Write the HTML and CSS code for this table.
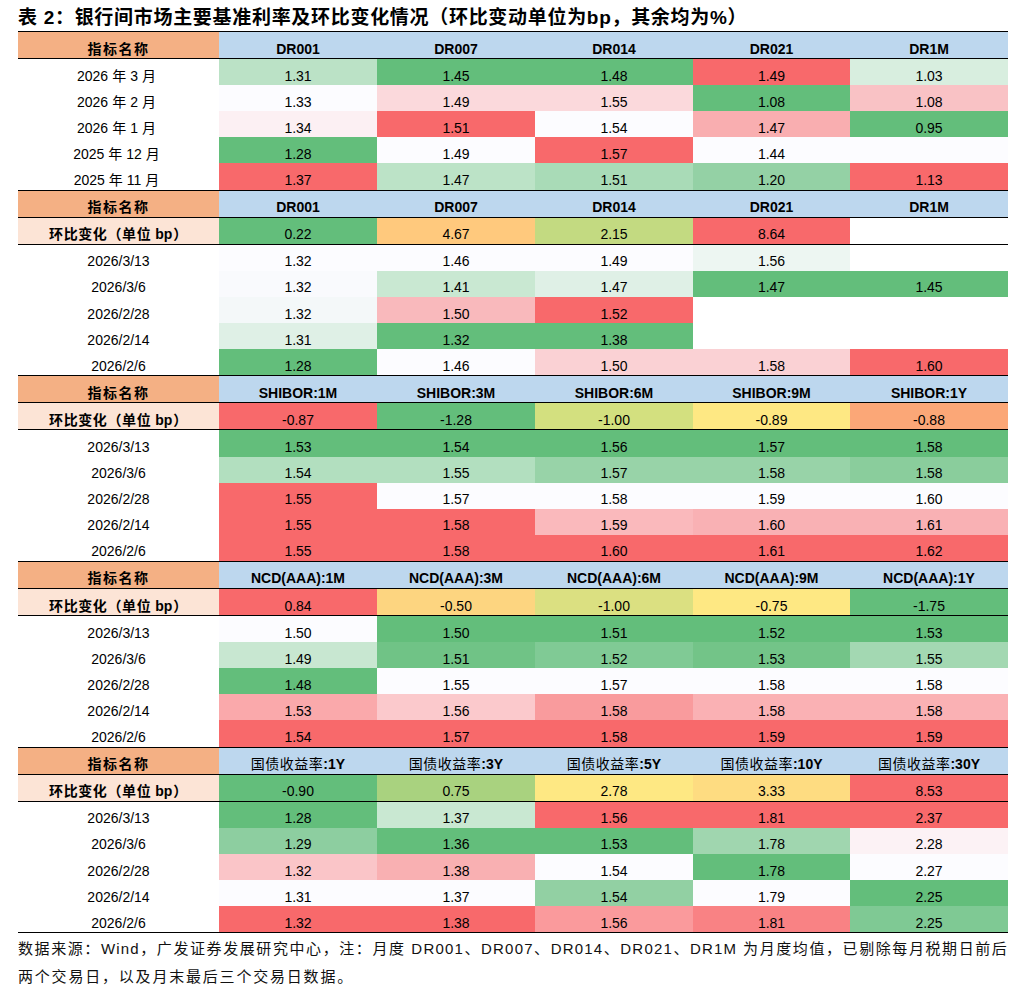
FILE: index.html
```html
<!DOCTYPE html>
<html lang="zh-CN">
<head>
<meta charset="utf-8">
<title>表 2</title>
<link rel="stylesheet" href="styles.css">
</head>
<body>
<div class="page">
  <div class="title">表 2：银行间市场主要基准利率及环比变化情况（环比变动单位为bp，其余均为%）</div>
  <div class="tbl">
    <div class="sec">
      <div class="row hd">
        <div class="c name">指标名称</div><div class="c th">DR001</div><div class="c th">DR007</div><div class="c th">DR014</div><div class="c th">DR021</div><div class="c th">DR1M</div>
      </div>
      <div class="row">
        <div class="c lab">2026<span class="cj">年</span>3<span class="cj">月</span></div>
        <div class="c" style="background:#BBE2C6">1.31</div><div class="c g">1.45</div><div class="c g">1.48</div><div class="c r">1.49</div><div class="c" style="background:#D8EEDF">1.03</div>
      </div>
      <div class="row">
        <div class="c lab">2026<span class="cj">年</span>2<span class="cj">月</span></div>
        <div class="c w">1.33</div><div class="c" style="background:#FBD9DC">1.49</div><div class="c" style="background:#FBD9DC">1.55</div><div class="c g">1.08</div><div class="c" style="background:#F9C2C5">1.08</div>
      </div>
      <div class="row">
        <div class="c lab">2026<span class="cj">年</span>1<span class="cj">月</span></div>
        <div class="c" style="background:#FCF0F3">1.34</div><div class="c r">1.51</div><div class="c w">1.54</div><div class="c" style="background:#F9AEB0">1.47</div><div class="c g">0.95</div>
      </div>
      <div class="row">
        <div class="c lab">2025<span class="cj">年</span>12<span class="cj">月</span></div>
        <div class="c g">1.28</div><div class="c w">1.49</div><div class="c r">1.57</div><div class="c w">1.44</div><div class="c w"></div>
      </div>
      <div class="row">
        <div class="c lab">2025<span class="cj">年</span>11<span class="cj">月</span></div>
        <div class="c r">1.37</div><div class="c" style="background:#BCE3C7">1.47</div><div class="c" style="background:#A9DBB7">1.51</div><div class="c" style="background:#94D1A5">1.20</div><div class="c r">1.13</div>
      </div>
    </div>

    <div class="sec">
      <div class="row hd">
        <div class="c name">指标名称</div><div class="c th">DR001</div><div class="c th">DR007</div><div class="c th">DR014</div><div class="c th">DR021</div><div class="c th">DR1M</div>
      </div>
      <div class="row chg">
        <div class="c chl">环比变化（单位<b>bp</b>）</div>
        <div class="c g">0.22</div><div class="c" style="background:#FFC97D">4.67</div><div class="c" style="background:#C3DA81">2.15</div><div class="c r">8.64</div><div class="c"></div>
      </div>
      <div class="row">
        <div class="c lab">2026/3/13</div>
        <div class="c w">1.32</div><div class="c w">1.46</div><div class="c w">1.49</div><div class="c" style="background:#EDF6F2">1.56</div><div class="c"></div>
      </div>
      <div class="row">
        <div class="c lab">2026/3/6</div>
        <div class="c" style="background:#F9FAFD">1.32</div><div class="c" style="background:#C9E8D2">1.41</div><div class="c" style="background:#DFF0E6">1.47</div><div class="c g">1.47</div><div class="c g">1.45</div>
      </div>
      <div class="row">
        <div class="c lab">2026/2/28</div>
        <div class="c" style="background:#F4F8F9">1.32</div><div class="c" style="background:#F9B9BC">1.50</div><div class="c r">1.52</div><div class="c"></div><div class="c"></div>
      </div>
      <div class="row">
        <div class="c lab">2026/2/14</div>
        <div class="c" style="background:#DFF0E6">1.31</div><div class="c g">1.32</div><div class="c g">1.38</div><div class="c"></div><div class="c"></div>
      </div>
      <div class="row">
        <div class="c lab">2026/2/6</div>
        <div class="c g">1.28</div><div class="c w">1.46</div><div class="c" style="background:#FAD1D4">1.50</div><div class="c" style="background:#FAD1D4">1.58</div><div class="c r">1.60</div>
      </div>
    </div>

    <div class="sec">
      <div class="row hd">
        <div class="c name">指标名称</div><div class="c th">SHIBOR:1M</div><div class="c th">SHIBOR:3M</div><div class="c th">SHIBOR:6M</div><div class="c th">SHIBOR:9M</div><div class="c th">SHIBOR:1Y</div>
      </div>
      <div class="row chg">
        <div class="c chl">环比变化（单位<b>bp</b>）</div>
        <div class="c r">-0.87</div><div class="c g">-1.28</div><div class="c" style="background:#D3E07F">-1.00</div><div class="c" style="background:#FEE883">-0.89</div><div class="c" style="background:#FBA777">-0.88</div>
      </div>
      <div class="row">
        <div class="c lab">2026/3/13</div>
        <div class="c g">1.53</div><div class="c g">1.54</div><div class="c g">1.56</div><div class="c g">1.57</div><div class="c g">1.58</div>
      </div>
      <div class="row">
        <div class="c lab">2026/3/6</div>
        <div class="c" style="background:#B2DFBF">1.54</div><div class="c" style="background:#B2DFBF">1.55</div><div class="c" style="background:#98D3A8">1.57</div><div class="c" style="background:#98D3A8">1.58</div><div class="c" style="background:#8ACD9C">1.58</div>
      </div>
      <div class="row">
        <div class="c lab">2026/2/28</div>
        <div class="c r">1.55</div><div class="c w">1.57</div><div class="c w">1.58</div><div class="c w">1.59</div><div class="c w">1.60</div>
      </div>
      <div class="row">
        <div class="c lab">2026/2/14</div>
        <div class="c r">1.55</div><div class="c r">1.58</div><div class="c" style="background:#FAB9BC">1.59</div><div class="c" style="background:#F9B1B4">1.60</div><div class="c" style="background:#F9B1B4">1.61</div>
      </div>
      <div class="row">
        <div class="c lab">2026/2/6</div>
        <div class="c r">1.55</div><div class="c r">1.58</div><div class="c r">1.60</div><div class="c r">1.61</div><div class="c r">1.62</div>
      </div>
    </div>

    <div class="sec">
      <div class="row hd">
        <div class="c name">指标名称</div><div class="c th">NCD(AAA):1M</div><div class="c th">NCD(AAA):3M</div><div class="c th">NCD(AAA):6M</div><div class="c th">NCD(AAA):9M</div><div class="c th">NCD(AAA):1Y</div>
      </div>
      <div class="row chg">
        <div class="c chl">环比变化（单位<b>bp</b>）</div>
        <div class="c r">0.84</div><div class="c" style="background:#FDD580">-0.50</div><div class="c" style="background:#DBE081">-1.00</div><div class="c" style="background:#FEE883">-0.75</div><div class="c g">-1.75</div>
      </div>
      <div class="row">
        <div class="c lab">2026/3/13</div>
        <div class="c w">1.50</div><div class="c g">1.50</div><div class="c g">1.51</div><div class="c g">1.52</div><div class="c g">1.53</div>
      </div>
      <div class="row">
        <div class="c lab">2026/3/6</div>
        <div class="c" style="background:#C8E7D1">1.49</div><div class="c" style="background:#70C386">1.51</div><div class="c" style="background:#80CA95">1.52</div><div class="c" style="background:#73C488">1.53</div><div class="c" style="background:#A3D8B2">1.55</div>
      </div>
      <div class="row">
        <div class="c lab">2026/2/28</div>
        <div class="c g">1.48</div><div class="c w">1.55</div><div class="c w">1.57</div><div class="c w">1.58</div><div class="c w">1.58</div>
      </div>
      <div class="row">
        <div class="c lab">2026/2/14</div>
        <div class="c" style="background:#FAA9AB">1.53</div><div class="c" style="background:#FBC9CC">1.56</div><div class="c" style="background:#F99B9D">1.58</div><div class="c" style="background:#FAB1B4">1.58</div><div class="c" style="background:#FAB1B4">1.58</div>
      </div>
      <div class="row">
        <div class="c lab">2026/2/6</div>
        <div class="c r">1.54</div><div class="c r">1.57</div><div class="c r">1.58</div><div class="c r">1.59</div><div class="c r">1.59</div>
      </div>
    </div>

    <div class="sec">
      <div class="row hd">
        <div class="c name">指标名称</div><div class="c th"><span class="cn">国债收益率</span>:1Y</div><div class="c th"><span class="cn">国债收益率</span>:3Y</div><div class="c th"><span class="cn">国债收益率</span>:5Y</div><div class="c th"><span class="cn">国债收益率</span>:10Y</div><div class="c th"><span class="cn">国债收益率</span>:30Y</div>
      </div>
      <div class="row chg">
        <div class="c chl">环比变化（单位<b>bp</b>）</div>
        <div class="c g">-0.90</div><div class="c" style="background:#A9D27F">0.75</div><div class="c" style="background:#FEE883">2.78</div><div class="c" style="background:#FEDC81">3.33</div><div class="c r">8.53</div>
      </div>
      <div class="row">
        <div class="c lab">2026/3/13</div>
        <div class="c g">1.28</div><div class="c" style="background:#C9E8D2">1.37</div><div class="c r">1.56</div><div class="c r">1.81</div><div class="c r">2.37</div>
      </div>
      <div class="row">
        <div class="c lab">2026/3/6</div>
        <div class="c" style="background:#8DCEA0">1.29</div><div class="c g">1.36</div><div class="c g">1.53</div><div class="c" style="background:#A0D6AF">1.78</div><div class="c" style="background:#FCF2F5">2.28</div>
      </div>
      <div class="row">
        <div class="c lab">2026/2/28</div>
        <div class="c" style="background:#FAC5C8">1.32</div><div class="c" style="background:#F9B0B2">1.38</div><div class="c w">1.54</div><div class="c g">1.78</div><div class="c w">2.27</div>
      </div>
      <div class="row">
        <div class="c lab">2026/2/14</div>
        <div class="c w">1.31</div><div class="c w">1.37</div><div class="c" style="background:#92D0A3">1.54</div><div class="c w">1.79</div><div class="c g">2.25</div>
      </div>
      <div class="row">
        <div class="c lab">2026/2/6</div>
        <div class="c r">1.32</div><div class="c r">1.38</div><div class="c" style="background:#FA9A9C">1.56</div><div class="c" style="background:#F98284">1.81</div><div class="c" style="background:#7FC994">2.25</div>
      </div>
    </div>
  </div>
  <div class="note">
    <p class="l1">数据来源：Wind，广发证券发展研究中心，注：月度 DR001、DR007、DR014、DR021、DR1M 为月度均值，已剔除每月税期日前后</p>
    <p class="l2">两个交易日，以及月末最后三个交易日数据。</p>
  </div>
</div>
</body>
</html>
```

FILE: styles.css
```css
html, body {
  margin: 0;
  padding: 0;
  background: #ffffff;
}

body {
  font-family: "Liberation Sans", "Noto Sans CJK SC", sans-serif;
  color: #000000;
}

.page {
  width: 990px;
  padding: 4px 18px 0;
}

.title {
  height: 27px;
  line-height: 27px;
  font-size: 19px;
  font-weight: 700;
  letter-spacing: 0.7px;
  white-space: nowrap;
}

.tbl {
  border-top: 1px solid #000;
  border-bottom: 1px solid #000;
}

.sec + .sec {
  border-top: 1px solid #000;
}

.row {
  display: grid;
  grid-template-columns: 201px 158px 158px 158px 157px 158px;
  height: 26.1px;
}

.row.hd,
.row.chg {
  border-bottom: 1px solid #000;
}

.c {
  display: flex;
  align-items: flex-end;
  justify-content: center;
  padding-bottom: 1.5px;
  box-sizing: border-box;
  font-size: 14px;
  line-height: 16px;
  white-space: nowrap;
  background: #ffffff;
}

.c.g { background: #63BE7B; }
.c.r { background: #F8696B; }
.c.w { background: #FCFCFF; }

.c.name {
  background: #F4B084;
  font-weight: 700;
  letter-spacing: 1.5px;
}

.c.th {
  background: #BDD7EE;
  font-weight: 700;
}

.c.th .cn {
  font-weight: 400;
  letter-spacing: 0.5px;
}

.c.chl {
  background: #FCE4D6;
  font-weight: 700;
  letter-spacing: 0.6px;
}

.c.chl b {
  font-weight: 700;
  letter-spacing: 0;
  margin: 0 1px 0 4px;
}

.c.lab .cj {
  margin: 0 4px;
}

.note {
  padding-top: 2px;
  font-size: 15px;
  letter-spacing: 1.2px;
  color: #111;
}

.note p {
  margin: 0;
  line-height: 28px;
  white-space: nowrap;
}

.note .l2 {
  letter-spacing: 1.8px;
}

.note .l1 {
  text-align: justify;
  text-align-last: justify;
  white-space: normal;
}
```
